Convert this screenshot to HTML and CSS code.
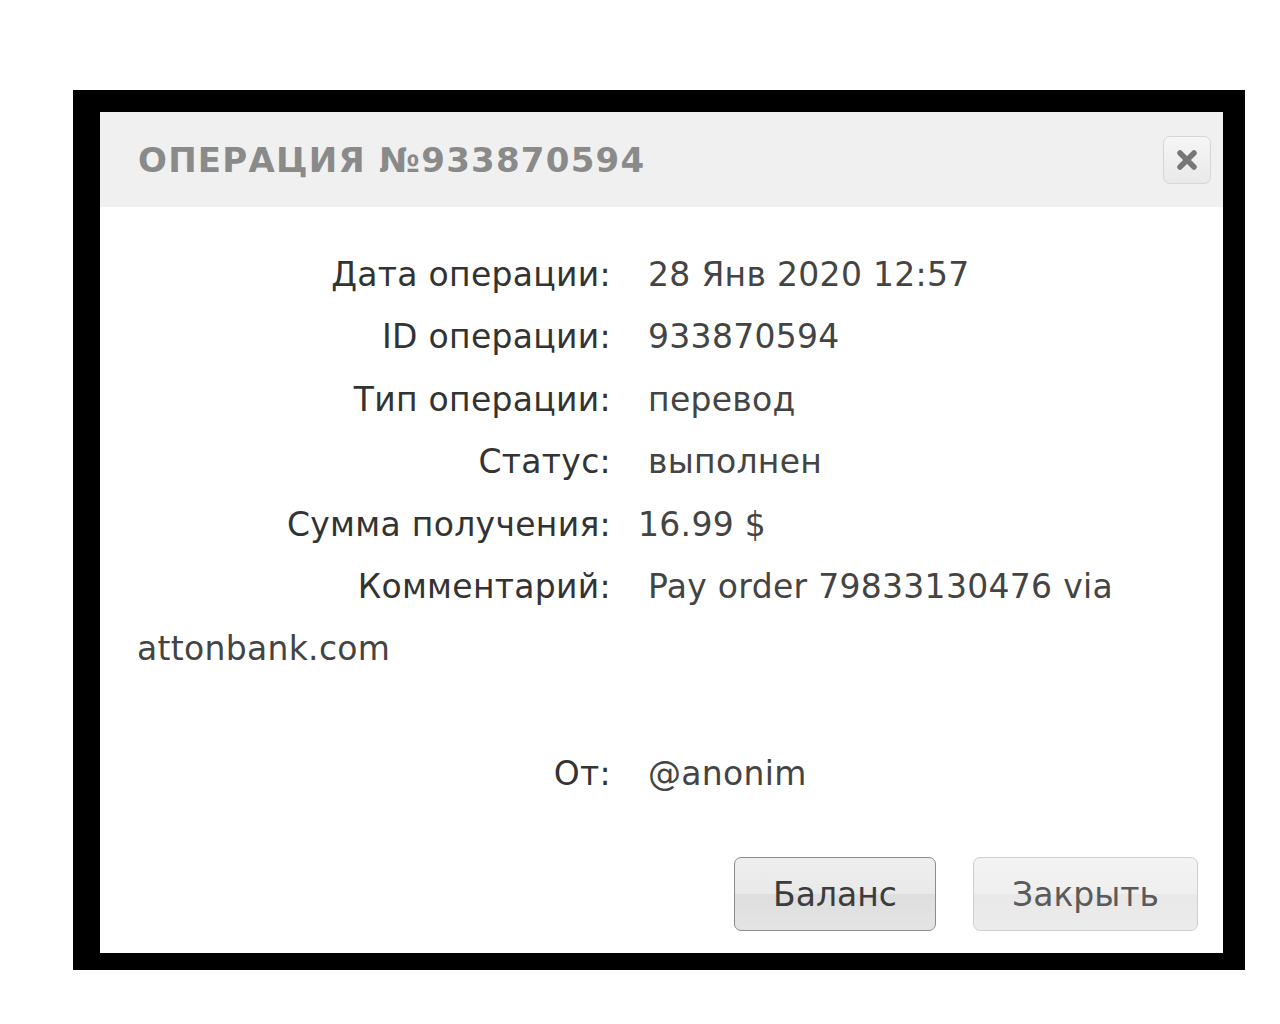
FILE: index.html
```html
<!DOCTYPE html>
<html lang="ru">
<head>
  <meta charset="UTF-8" />
  <title>Операция №933870594</title>
  <link rel="stylesheet" href="styles.css">
</head>
<body>

<div class="frame">
  <div class="dialog">
    <div class="dialog-head">
      <h1 class="dialog-title">Операция №933870594</h1>
      <button class="close-btn" type="button" title="Закрыть">
        <svg width="22" height="22" viewBox="0 0 22 22">
          <path d="M4 4 L18 18 M18 4 L4 18" stroke="#777" stroke-width="5.5" stroke-linecap="round" />
        </svg>
      </button>
    </div>

    <div class="dialog-body">
      <div class="row"><span class="label">Дата операции:</span><span class="value">28 Янв 2020 12:57</span></div>
      <div class="row"><span class="label">ID операции:</span><span class="value">933870594</span></div>
      <div class="row"><span class="label">Тип операции:</span><span class="value">перевод</span></div>
      <div class="row"><span class="label">Статус:</span><span class="value">выполнен</span></div>
      <div class="row"><span class="label">Сумма получения:</span><span class="value sum">16.99 $</span></div>
      <div class="row"><span class="label">Комментарий:</span><span class="value">Pay order 79833130476 via attonbank.com</span></div>
      <div class="row from"><span class="label">От:</span><span class="value">@anonim</span></div>
    </div>

    <div class="dialog-foot">
      <button class="btn btn-main" type="button">Баланс</button>
      <button class="btn" type="button">Закрыть</button>
    </div>
  </div>
</div>

</body>
</html>
```

FILE: styles.css
```css
body {
  margin: 0;
  background: #fff;
  font-family: "DejaVu Sans", Verdana, sans-serif;
}
.frame {
  box-sizing: border-box;
  width: 1172px;
  height: 880px;
  margin: 90px 0 0 73px;
  border-style: solid;
  border-color: #000;
  border-width: 22px 22px 17px 27px;
}
.dialog {
  height: 100%;
  background: #fff;
  display: flex;
  flex-direction: column;
}
.dialog-head {
  height: 95px;
  flex: none;
  background: #f0f0f0;
  display: flex;
  align-items: center;
  justify-content: space-between;
  padding: 0 12px 0 38px;
}
.dialog-title {
  margin: 0;
  font-family: "DejaVu Sans", sans-serif;
  font-size: 34px;
  font-weight: bold;
  letter-spacing: 1.25px;
  text-transform: uppercase;
  color: #8a8a8a;
}
.close-btn {
  width: 48px;
  height: 48px;
  padding: 0;
  border: 1px solid #d6d6d6;
  border-radius: 7px;
  background: linear-gradient(#f6f6f6, #e9e9e9);
  display: flex;
  align-items: center;
  justify-content: center;
  cursor: pointer;
}
.dialog-body {
  padding: 37px 37px 0 37px;
  font-size: 33px;
  line-height: 62.4px;
  letter-spacing: 0.3px;
  color: #444;
}
.label {
  display: inline-block;
  width: 474px;
  margin-right: 37px;
  text-align: right;
  color: #333;
}
.value.sum {
  margin-left: -10px;
}
.row.from {
  margin-top: 62.4px;
}
.dialog-foot {
  margin-top: auto;
  display: flex;
  justify-content: flex-end;
  gap: 37px;
  padding: 0 25px 22px 0;
}
.btn {
  height: 74px;
  padding: 0 38px;
  font-family: "DejaVu Sans", Verdana, sans-serif;
  font-size: 33px;
  color: #5a5a5a;
  border: 1px solid #cfcfcf;
  border-radius: 7px;
  background: linear-gradient(#f3f3f3 0%, #efefef 50%, #e8e8e8 50%, #ececec 100%);
  cursor: pointer;
}
.btn-main {
  color: #3c3c3c;
  border-color: #8c8c8c;
  background: linear-gradient(#eeeeee 0%, #e9e9e9 50%, #dedede 50%, #e4e4e4 100%);
}
```
